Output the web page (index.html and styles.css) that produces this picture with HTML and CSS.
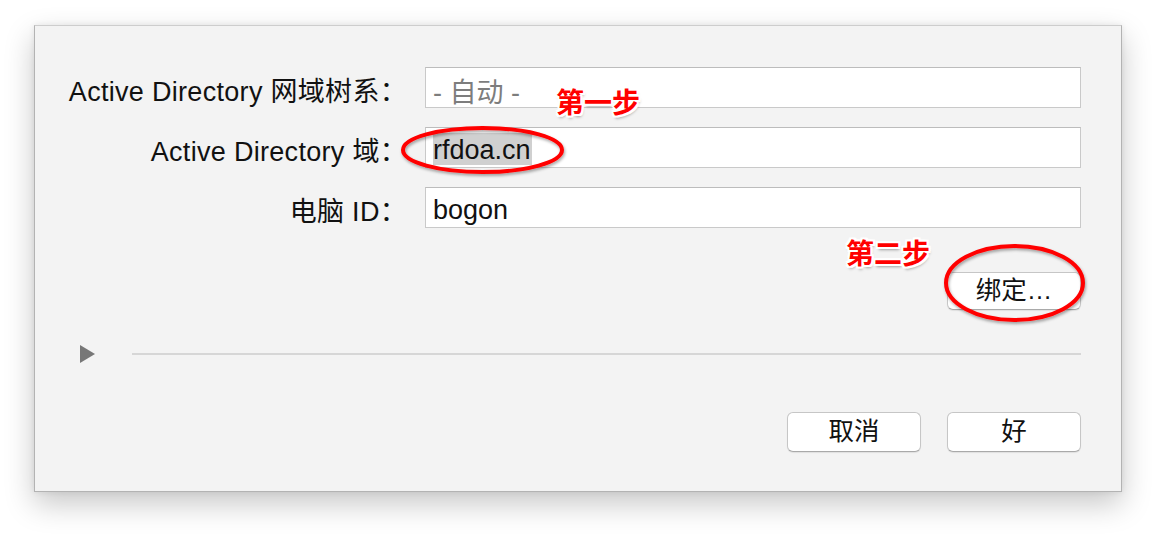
FILE: index.html
```html
<!DOCTYPE html>
<html lang="zh-CN">
<head>
<meta charset="utf-8">
<title>Active Directory</title>
<link rel="stylesheet" href="styles.css">
</head>
<body>
<div class="page">
  <div class="dialog">
    <div class="form">
      <div class="lbl">Active Directory 网域树系：</div>
      <div class="field"><span class="placeholder">- 自动 -</span></div>
      <div class="lbl">Active Directory 域：</div>
      <div class="field"><span class="selected">rfdoa.cn</span></div>
      <div class="lbl">电脑 ID：</div>
      <div class="field"><span>bogon</span></div>
    </div>
    <div class="bind-row">
      <button class="btn bind">绑定…</button>
    </div>
    <div class="disclosure">
      <span class="tri"></span>
      <span class="rule"></span>
    </div>
    <div class="footer">
      <button class="btn">取消</button>
      <button class="btn">好</button>
    </div>
  </div>

  <svg class="marks" width="1156" height="534" viewBox="0 0 1156 534">
    <defs>
      <filter id="sh" x="-20%" y="-20%" width="140%" height="140%">
        <feDropShadow dx="1" dy="2" stdDeviation="1.5" flood-color="#000" flood-opacity="0.35"/>
      </filter>
    </defs>
    <ellipse cx="482.5" cy="150" rx="79.5" ry="22" fill="none" stroke="#f00" stroke-width="4" filter="url(#sh)"/>
    <ellipse cx="1014.5" cy="283" rx="68.5" ry="37" fill="none" stroke="#f00" stroke-width="4" filter="url(#sh)"/>
  </svg>
  <div class="note note1">第一步</div>
  <div class="note note2">第二步</div>
</div>
</body>
</html>
```

FILE: styles.css
```css
html, body {
  margin: 0;
  padding: 0;
  background: #ffffff;
}

.page {
  position: relative;
  width: 1156px;
  height: 534px;
  overflow: hidden;
  padding-top: 25px;
  box-sizing: border-box;
  font-family: "Liberation Sans", "Noto Sans CJK SC", sans-serif;
  color: #111;
}

.dialog {
  margin-left: 34px;
  width: 1088px;
  height: 467px;
  box-sizing: border-box;
  background: #f3f3f3;
  border: 1px solid #b3b3b3;
  border-top-color: #cdcdcd;
  box-shadow: 0 12px 28px rgba(0, 0, 0, 0.22), 0 0 6px rgba(0, 0, 0, 0.08);
  padding: 41px 40px 0 0;
  display: flex;
  flex-direction: column;
}

.form {
  display: grid;
  grid-template-columns: 372px 656px;
  column-gap: 18px;
  row-gap: 19px;
}

.lbl {
  font-size: 27px;
  letter-spacing: 0.3px;
  text-align: right;
  white-space: nowrap;
  height: 41px;
  box-sizing: border-box;
  padding-top: 5px;
  line-height: 41px;
}

.field {
  height: 41px;
  box-sizing: border-box;
  background: #fff;
  border: 1px solid #c9c9c9;
  border-top-color: #bcbcbc;
  padding-left: 7px;
  padding-top: 5px;
  display: flex;
  align-items: center;
  font-size: 27px;
}

.placeholder {
  color: #7d7d7d;
}

.selected {
  background: #d0d0d0;
  line-height: 30px;
  padding-right: 1px;
  margin-top: -2px;
  padding-top: 2px;
}

.bind-row {
  display: flex;
  justify-content: flex-end;
  margin-top: 44px;
}

.btn {
  width: 134px;
  height: 40px;
  box-sizing: border-box;
  background: #fff;
  border: 1px solid #c6c6c6;
  border-bottom-color: #a9a9a9;
  border-radius: 6px;
  box-shadow: 0 1px 1px rgba(0, 0, 0, 0.08);
  font-family: "Liberation Sans", "Noto Sans CJK SC", sans-serif;
  font-size: 25.5px;
  color: #111;
  padding: 0;
  line-height: 1;
}

.bind {
  height: 38px;
}

.disclosure {
  display: flex;
  align-items: center;
  margin-top: 35px;
  margin-left: 45px;
  height: 18px;
}

.tri {
  width: 0;
  height: 0;
  border-top: 9px solid transparent;
  border-bottom: 9px solid transparent;
  border-left: 15px solid #777;
}

.rule {
  flex: 1;
  height: 2px;
  background: #d6d6d6;
  margin-left: 37px;
}

.footer {
  display: flex;
  justify-content: flex-end;
  gap: 26px;
  margin-top: 49px;
}

.marks {
  position: absolute;
  left: 0;
  top: 0;
  pointer-events: none;
}

.note {
  position: absolute;
  font-family: "Noto Sans CJK SC", sans-serif;
  font-weight: 700;
  font-size: 28px;
  line-height: 1;
  color: #ff0000;
  text-shadow:
    2px 0 0 #fff, -2px 0 0 #fff, 0 2px 0 #fff, 0 -2px 0 #fff,
    2px 2px 0 #fff, -2px -2px 0 #fff, 2px -2px 0 #fff, -2px 2px 0 #fff,
    1px 3px 3px rgba(0, 0, 0, 0.35);
}

.note1 {
  left: 556px;
  top: 87px;
}

.note2 {
  left: 846px;
  top: 238px;
}
```
